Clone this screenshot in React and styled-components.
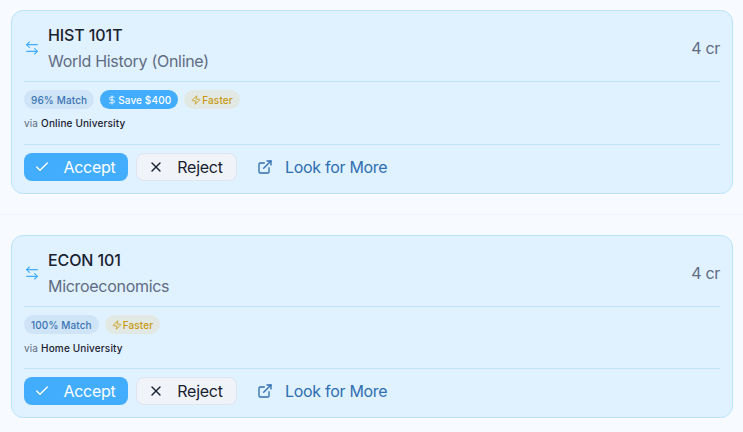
import React from "react";
import styled, { createGlobalStyle } from "styled-components";
import { ArrowLeftRight, Check, DollarSign, ExternalLink, X, Zap } from "lucide-react";

const Global = createGlobalStyle`
  html, body { margin: 0; padding: 0; background: #f7fbff; }
  body { font-family: Inter, "Liberation Sans", sans-serif; overflow: hidden; }
`;
const Page = styled.div`
  width: 743px; height: 432px; padding: 10px 10px 0 11px; box-sizing: border-box;
  display: flex; flex-direction: column; overflow: hidden;
`;
const Card = styled.article`
  background: #e0f1ff; border: 1px solid #bce3fd; border-radius: 12px;
  padding: 11px 12px 12px; box-sizing: border-box; height: ${p => p.$h}px;
  display: flex; flex-direction: column;
`;
const Separator = styled.div`
  height: 1px; background: #eef4fa; margin: 20px -11px 20px -11px;
`;
const Header = styled.header`
  display: flex; align-items: center; height: 52px; padding-bottom: 7px;
  border-bottom: 1px solid #bfe4fb;
`;
const Swap = styled.span`
  width: 24px; flex: none; display: flex; color: #42adfc;
`;
const Names = styled.div`flex: 1; display: flex; flex-direction: column; gap: 2px;`;
const Code = styled.div`font-size: 16px; line-height: 24px; font-weight: 500; color: #1a2230; letter-spacing: -0.1px;`;
const Title = styled.div`font-size: 16px; line-height: 24px; color: #5f6c82; letter-spacing: -0.3px;`;
const Credits = styled.div`font-size: 16px; color: #5f6c82; letter-spacing: -0.3px;`;
const Info = styled.div`
  padding: 8px 0 ${p => p.$pb}px; border-bottom: 1px solid #bfe4fb;
`;
const Badges = styled.div`display: flex; gap: 6px;`;
const Badge = styled.span`
  display: inline-flex; align-items: center; gap: 1px; height: 19px; padding: 0 7px;
  border-radius: 10px; font-size: 10px; font-weight: 500; letter-spacing: 0.12px;
  background: ${p => p.$bg}; color: ${p => p.$fg};
`;
const Via = styled.div`
  margin-top: 7px; font-size: 10px; line-height: 15px; color: #5f6c82; letter-spacing: 0.15px;
  b { font-weight: 500; color: #1a2230; }
`;
const Actions = styled.div`display: flex; align-items: center; gap: 8px; padding-top: 8px;`;
const Button = styled.button`
  display: inline-flex; align-items: center; justify-content: center; gap: 13px;
  height: 28px; box-sizing: border-box; padding: 0 2px 0 0; font: inherit; font-size: 16px;
  letter-spacing: -0.25px; border-radius: 8px; cursor: pointer;
  width: ${p => p.$w}px;
`;
const Accept = styled(Button)`background: #42adfd; color: #fff; border: 0;`;
const Reject = styled(Button)`background: #f0f4f9; color: #1a2230; border: 1px solid #dfe5ee;`;
const More = styled.a`
  display: inline-flex; align-items: center; gap: 12px; margin-left: 12px;
  font-size: 16px; letter-spacing: -0.3px; color: #2f6fb0;
`;

const Course = ({ code, title, match, save, via, h, pb }) => (
  <Card $h={h}>
    <Header>
      <Swap><ArrowLeftRight size={16} strokeWidth={1.75} /></Swap>
      <Names>
        <Code>{code}</Code>
        <Title>{title}</Title>
      </Names>
      <Credits>4 cr</Credits>
    </Header>
    <Info $pb={pb}>
      <Badges>
        <Badge $bg="#cfe4f6" $fg="#3a74b4">{match}</Badge>
        {save && <Badge $bg="#42adfd" $fg="#fff"><DollarSign size={10} />{save}</Badge>}
        <Badge $bg="#e2e9e4" $fg="#c9980f"><Zap size={10} />Faster</Badge>
      </Badges>
      <Via>via <b>{via}</b></Via>
    </Info>
    <Actions>
      <Accept $w={104}><Check size={16} strokeWidth={2} />Accept</Accept>
      <Reject $w={101}><X size={16} strokeWidth={2} />Reject</Reject>
      <More><ExternalLink size={16} />Look for More</More>
    </Actions>
  </Card>
);

export default function App() {
  return (
    <Page>
      <Global />
      <Course h={184} pb={13} code="HIST 101T" title="World History (Online)" match="96% Match" save="Save $400" via="Online University" />
      <Separator />
      <Course h={183} pb={12} code="ECON 101" title="Microeconomics" match="100% Match" via="Home University" />
    </Page>
  );
}
